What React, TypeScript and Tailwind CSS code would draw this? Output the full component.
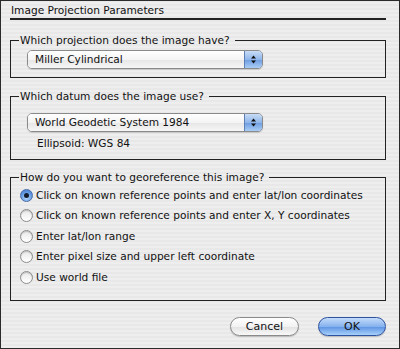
import { useState } from 'react';

const options = [
  'Click on known reference points and enter lat/lon coordinates',
  'Click on known reference points and enter X, Y coordinates',
  'Enter lat/lon range',
  'Enter pixel size and upper left coordinate',
  'Use world file',
];

function PopupArrows() {
  return (
    <svg width="7" height="11" viewBox="0 0 7 11">
      <path d="M3.5 1.5 L6 4.5 L1 4.5 Z" fill="#111" />
      <path d="M3.5 9.5 L6 6.5 L1 6.5 Z" fill="#111" />
    </svg>
  );
}

function Popup({ value }: { value: string }) {
  return (
    <div className="flex h-[19px] w-[236px] overflow-hidden rounded-[5px] border border-[#8a8a8a] shadow-[0_1px_1px_rgba(0,0,0,0.15)]">
      <div className="flex flex-1 items-center bg-[linear-gradient(#ffffff,#f4f4f4_50%,#e6e6e6_51%,#f6f6f6)] pl-[7px] leading-none">
        {value}
      </div>
      <div className="flex w-[18px] items-center justify-center border-l border-[#5d7fb6] bg-[linear-gradient(#c8dcf6,#8fb6ea_50%,#6c9be0_51%,#a9cdf6)]">
        <PopupArrows />
      </div>
    </div>
  );
}

function Radio({ checked }: { checked: boolean }) {
  if (checked) {
    return (
      <div className="flex h-[13px] w-[13px] shrink-0 items-center justify-center rounded-full border border-[#4a6ea8] bg-[radial-gradient(circle_at_50%_70%,#b9dafc,#5f95e0_60%,#3f72c8)]">
        <div className="h-[5px] w-[5px] rounded-full bg-[#141c2c]" />
      </div>
    );
  }
  return (
    <div className="h-[13px] w-[13px] shrink-0 rounded-full border border-[#8c8c8c] bg-[linear-gradient(#e8e8e8,#ffffff)] shadow-[inset_0_1px_1px_rgba(0,0,0,0.2)]" />
  );
}

export default function App() {
  const [choice, setChoice] = useState(0);

  return (
    <div className="flex h-[349px] w-[400px] flex-col border border-[#2b2b2b] bg-[repeating-linear-gradient(0deg,#eeeeee_0px,#eeeeee_2px,#e8e8e8_2px,#e8e8e8_4px)] pl-[9px] pr-[13px] pt-[2px] font-['DejaVu_Sans',sans-serif] text-[10.6px] text-[#111]">
      {/* Title */}
      <div className="border-b-2 border-[#222] pb-[1px] pl-[1px] leading-[14px]">Image Projection Parameters</div>

      {/* Projection */}
      <fieldset className="mt-[13px] h-[45px] border border-[#222] px-0">
        <legend className="ml-[8px] pl-[1px] pr-[5px] leading-[14px]">Which projection does the image have?</legend>
        <div className="mt-[3px] pl-[16px]">
          <Popup value="Miller Cylindrical" />
        </div>
      </fieldset>

      {/* Datum */}
      <fieldset className="mt-[11px] h-[71px] border border-[#222] px-0">
        <legend className="ml-[8px] pl-[1px] pr-[5px] leading-[14px]">Which datum does the image use?</legend>
        <div className="mt-[10px] pl-[16px]">
          <Popup value="World Geodetic System 1984" />
        </div>
        <div className="mt-[4px] pl-[26px] leading-[14px]">Ellipsoid: WGS 84</div>
      </fieldset>

      {/* Georeference */}
      <fieldset className="mt-[10px] h-[131px] border border-[#222] px-0">
        <legend className="ml-[8px] pl-[1px] pr-[5px] leading-[14px]">How do you want to georeference this image?</legend>
        <div className="mt-[1px] flex flex-col pl-[9px]">
          {options.map((label, i) => (
            <div
              key={label}
              className="flex h-[20.5px] cursor-default items-center gap-[3px]"
              onClick={() => setChoice(i)}
            >
              <Radio checked={choice === i} />
              <span className="leading-none">{label}</span>
            </div>
          ))}
        </div>
      </fieldset>

      {/* Buttons */}
      <div className="mt-[16px] flex justify-end gap-[19px] pr-[0px]">
        <button className="h-[19px] w-[69px] rounded-full border border-[#8a8a8a] bg-[linear-gradient(#ffffff,#f2f2f2_50%,#e2e2e2_51%,#f8f8f8)] text-[11px] leading-none shadow-[0_1px_1px_rgba(0,0,0,0.2)]">
          Cancel
        </button>
        <button className="h-[19px] w-[68px] rounded-full border border-[#2d52a0] bg-[linear-gradient(#c4dcfa,#86b2ee_50%,#5c92e2_51%,#a6d0fa)] text-[11px] leading-none shadow-[0_1px_1px_rgba(0,0,0,0.2)]">
          OK
        </button>
      </div>
    </div>
  );
}
